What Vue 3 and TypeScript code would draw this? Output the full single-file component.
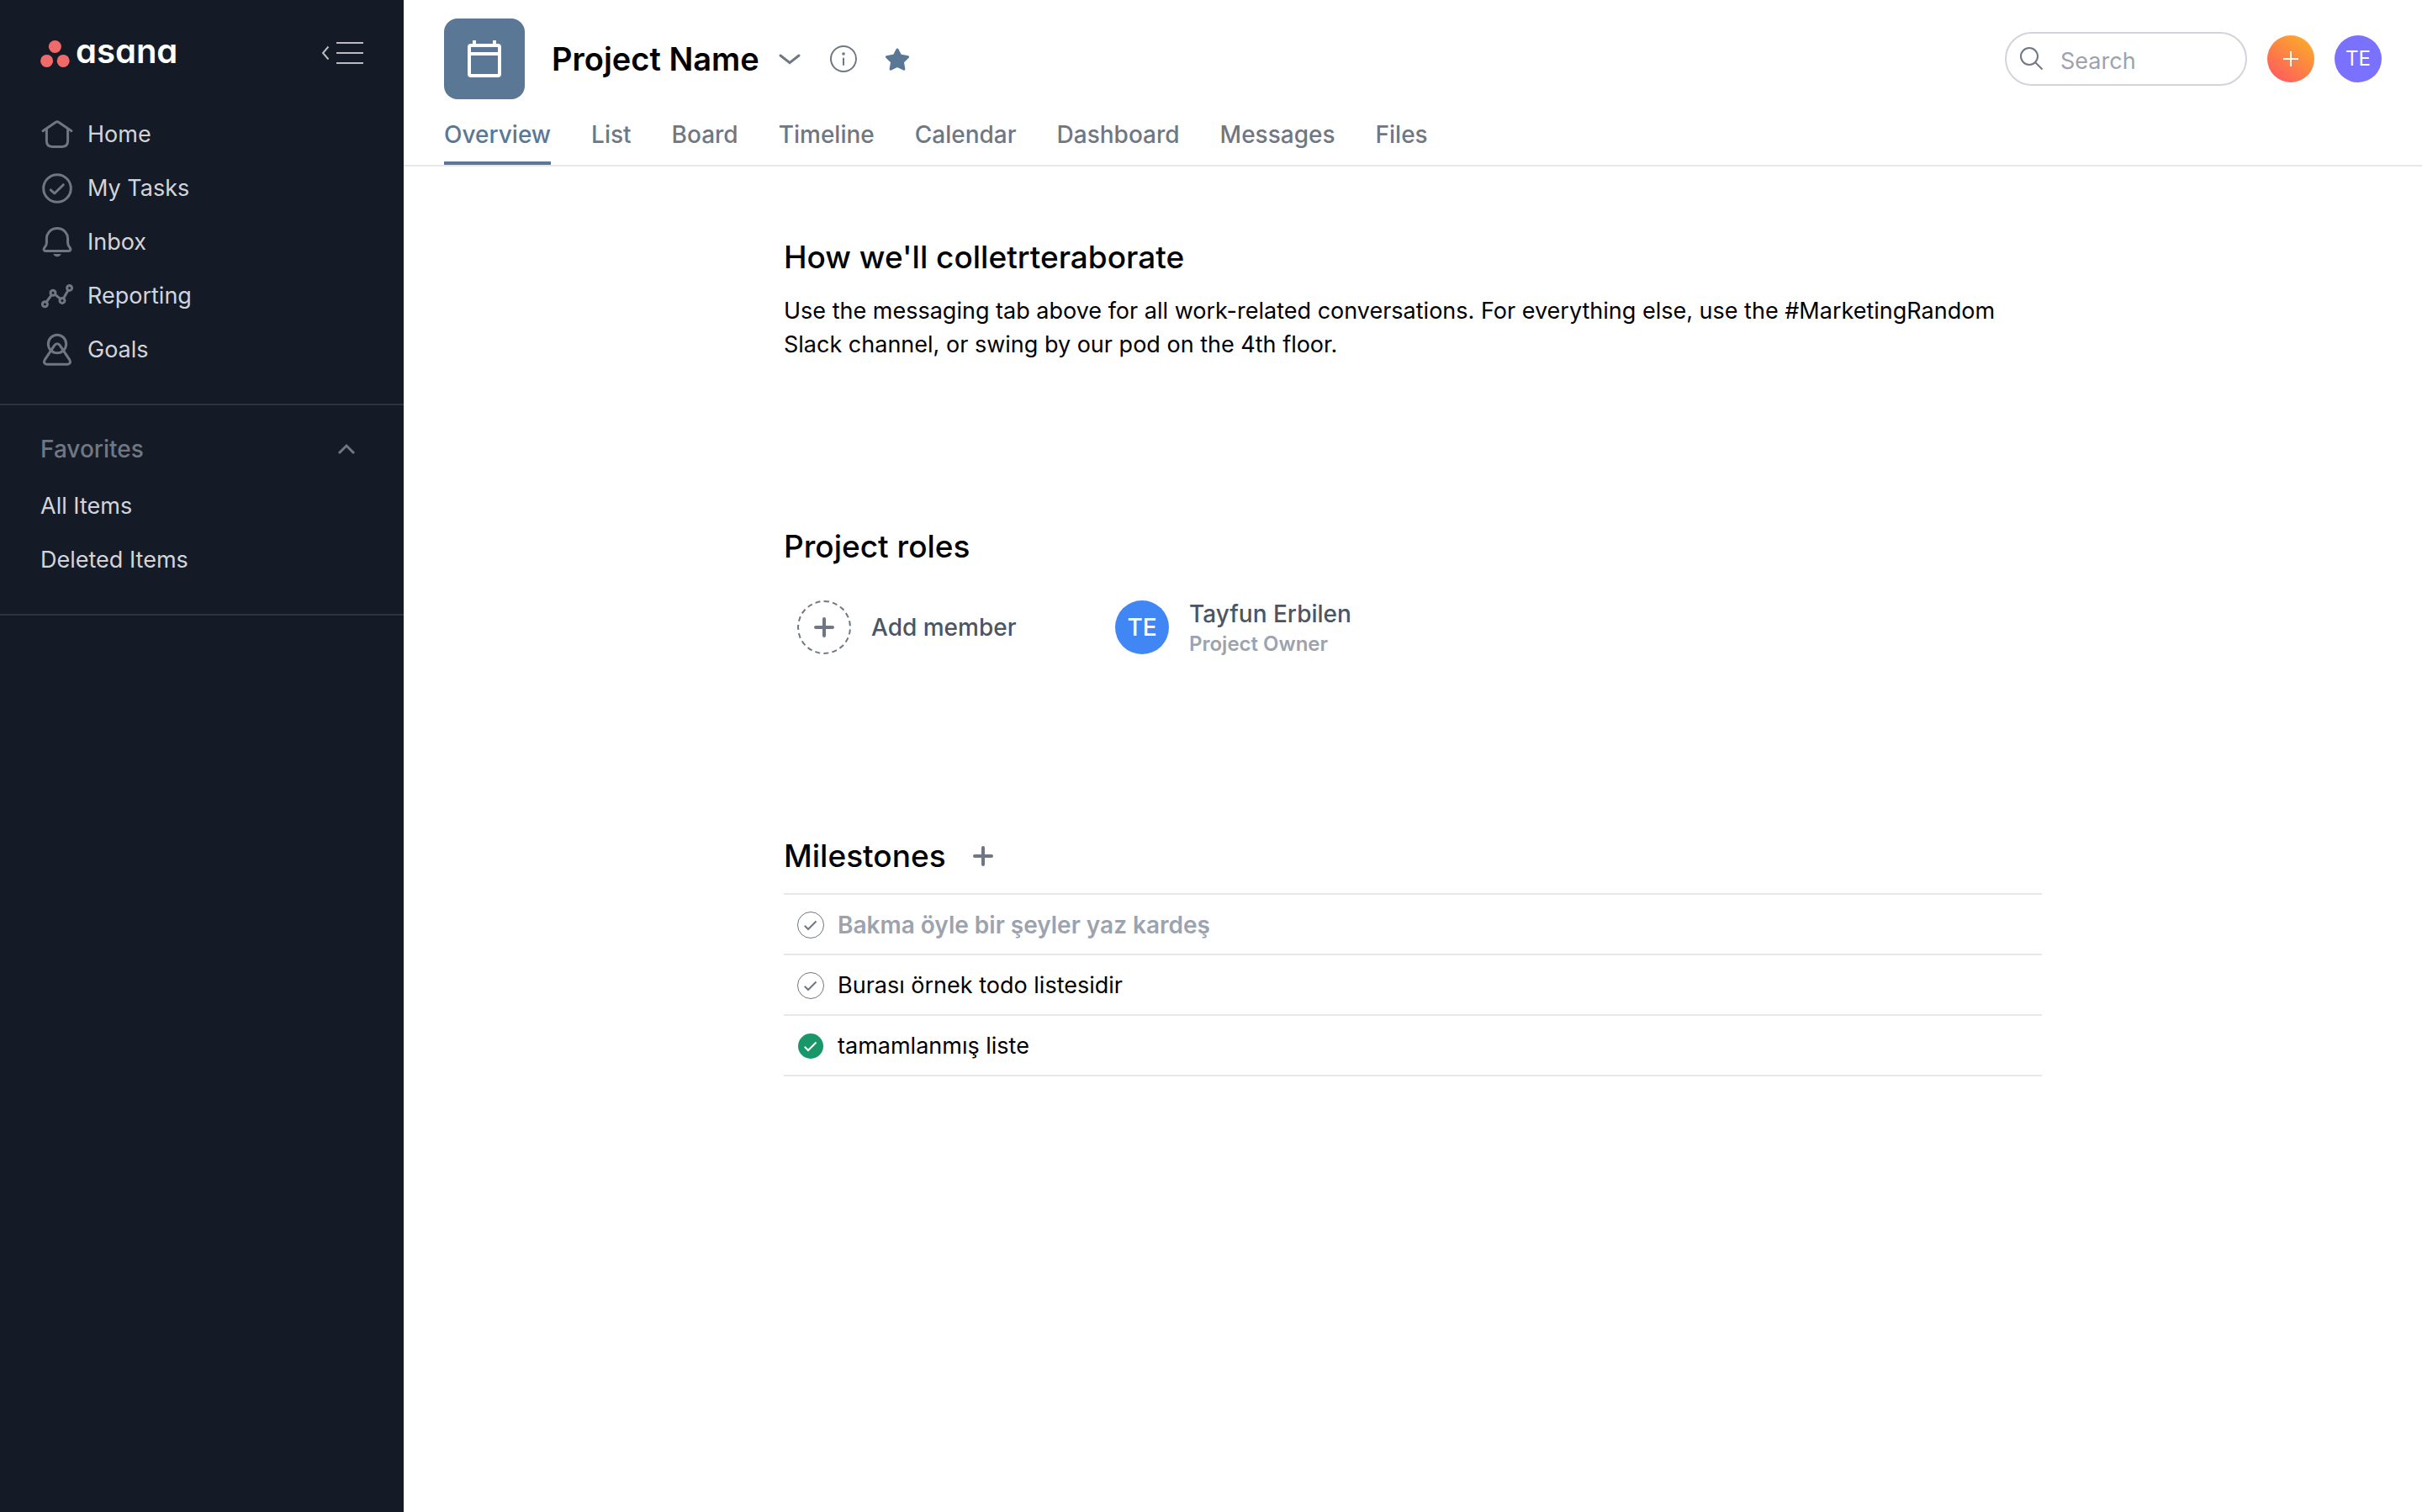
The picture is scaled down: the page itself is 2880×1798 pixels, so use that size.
<script setup lang="ts">
import { ref } from 'vue'

interface NavItem {
  label: string
  icon: 'home' | 'tasks' | 'inbox' | 'reporting' | 'goals'
}

interface Milestone {
  id: number
  text: string
  done: boolean
  muted: boolean
}

const navItems: NavItem[] = [
  { label: 'Home', icon: 'home' },
  { label: 'My Tasks', icon: 'tasks' },
  { label: 'Inbox', icon: 'inbox' },
  { label: 'Reporting', icon: 'reporting' },
  { label: 'Goals', icon: 'goals' },
]

const favorites: string[] = ['All Items', 'Deleted Items']

const tabs: string[] = ['Overview', 'List', 'Board', 'Timeline', 'Calendar', 'Dashboard', 'Messages', 'Files']
const activeTab = ref('Overview')
const query = ref('')

const milestones = ref<Milestone[]>([
  { id: 1, text: 'Bakma öyle bir şeyler yaz kardeş', done: false, muted: true },
  { id: 2, text: 'Burası örnek todo listesidir', done: false, muted: false },
  { id: 3, text: 'tamamlanmış liste', done: true, muted: false },
])
</script>

<template>
  <div class="app">
    <aside class="sidebar">
      <div class="brand-row">
        <a href="#" class="brand">
          <svg class="brand-mark" viewBox="0 0 36 32" aria-hidden="true">
            <circle cx="17.4" cy="7.5" r="7.5" />
            <circle cx="7.6" cy="24.4" r="7.5" />
            <circle cx="27.2" cy="24.4" r="7.5" />
          </svg>
          <span class="brand-name">asana</span>
        </a>
        <button class="icon-button" type="button" aria-label="Collapse sidebar">
          <svg class="collapse-icon" viewBox="0 0 50 28" aria-hidden="true">
            <path d="M8.500 5.500L2 13L8.500 20.500M18 1H50M18 13H50M18 25H50" />
          </svg>
        </button>
      </div>

      <nav class="nav" aria-label="Main">
        <a v-for="item in navItems" :key="item.label" href="#" class="nav-link">
          <svg class="nav-icon" viewBox="0 0 40 40" aria-hidden="true">
            <template v-if="item.icon === 'home'">
              <path d="M3 15.700L18.400 5.300Q20 4.200 21.600 5.300L37 15.700" />
              <path d="M7.400 13.500V27.800Q7.400 34.400 14 34.400H26Q32.600 34.400 32.600 27.800V13.500" />
            </template>
            <template v-else-if="item.icon === 'tasks'">
              <circle cx="20" cy="20" r="16.300" />
              <path d="M12.300 21.800L16.800 26L27.300 15.700" />
            </template>
            <template v-else-if="item.icon === 'inbox'">
              <path d="M20 3.500C12.600 3.500 7.400 9.200 7.400 16V21C7.400 23.200 6.800 24 5 26.400C3.400 28.600 4 30.400 6.400 30.400H33.600C36 30.400 36.600 28.600 35 26.400C33.200 24 32.600 23.200 32.600 21V16C32.600 9.200 27.400 3.500 20 3.500Z" />
              <path class="solid" d="M15.200 34H24.800Q23 37.200 20 37.200T15.200 34Z" />
            </template>
            <template v-else-if="item.icon === 'reporting'">
              <circle cx="5.400" cy="29.700" r="3" />
              <circle cx="15" cy="16.300" r="3" />
              <circle cx="26" cy="25.400" r="3" />
              <circle cx="34.600" cy="10.400" r="3" />
              <path d="M7.200 27.200L13.200 18.800M17.400 18.200L23.700 23.400M27.500 22.700L33.100 13" />
            </template>
            <template v-else>
              <circle cx="20" cy="13" r="10.700" />
              <path d="M16.800 14.600C18.500 12 21.500 12 23.200 14.600L34.600 31.600C36.600 34.800 35.200 37.300 32 37.300H8C4.800 37.300 3.400 34.800 5.400 31.600Z" />
            </template>
          </svg>
          {{ item.label }}
        </a>
      </nav>

      <section class="favorites">
        <div class="favorites-head">
          <h2 class="favorites-title">Favorites</h2>
          <button class="icon-button fav-toggle" type="button" aria-label="Toggle favorites">
            <svg class="icon-24" viewBox="0 0 24 24" aria-hidden="true">
              <path d="M3 17L12 8L21 17" />
            </svg>
          </button>
        </div>
        <a v-for="name in favorites" :key="name" href="#" class="nav-link">{{ name }}</a>
      </section>
    </aside>

    <div class="page">
      <header class="header">
        <div class="header-top">
          <div class="project-tile">
            <svg class="project-icon" viewBox="0 0 48 48" aria-hidden="true">
              <rect x="6" y="8" width="36" height="36" rx="2" />
              <path d="M12 2V8M36 2V8M4 18H44" />
            </svg>
          </div>
          <h1 class="project-name">Project Name</h1>
          <div class="project-actions">
            <button class="icon-button" type="button" aria-label="Project menu">
              <svg class="icon-32" viewBox="0 0 32 32" aria-hidden="true">
                <path class="chevron" d="M5 12L16 20.700L27 12" />
              </svg>
            </button>
            <button class="icon-button" type="button" aria-label="Project details">
              <svg class="icon-32 info" viewBox="0 0 32 32" aria-hidden="true">
                <circle cx="16" cy="16" r="15" />
                <path d="M16 15.500V23" />
                <circle class="dot" cx="16" cy="10" r="1.800" />
              </svg>
            </button>
            <button class="icon-button" type="button" aria-label="Favorite project">
              <svg class="icon-32 star" viewBox="0 0 32 32" aria-hidden="true">
                <path d="M16 5L19.600 12L28.600 13.700L22.400 19.700L23.900 28.200L16 24.300L8.100 28.200L9.600 19.700L3.400 13.700L12.400 12Z" />
              </svg>
            </button>
          </div>

          <div class="tools">
            <label class="search">
              <svg class="icon-32 search-icon" viewBox="0 0 32 32" aria-hidden="true">
                <circle cx="13" cy="13" r="10" />
                <path d="M20.500 20.500L28.500 28.500" />
              </svg>
              <input v-model="query" class="search-input" type="search" placeholder="Search" aria-label="Search" />
            </label>
            <button class="round add" type="button" aria-label="Create">
              <svg class="icon-24" viewBox="0 0 24 24" aria-hidden="true">
                <path d="M12 3V21M3 12H21" />
              </svg>
            </button>
            <button class="round account" type="button">TE</button>
          </div>
        </div>

        <nav class="tabs" aria-label="Project views">
          <a
            v-for="tab in tabs"
            :key="tab"
            href="#"
            class="tab"
            :class="{ active: tab === activeTab }"
            @click.prevent="activeTab = tab"
          >{{ tab }}</a>
        </nav>
      </header>

      <main class="content">
        <section class="about">
          <h2 class="heading">How we'll colletrteraborate</h2>
          <p class="copy">Use the messaging tab above for all work-related conversations. For everything else, use the #MarketingRandom Slack channel, or swing by our pod on the 4th floor.</p>
        </section>

        <section class="roles-section">
          <h2 class="heading">Project roles</h2>
          <div class="roles">
            <button class="role" type="button">
              <span class="avatar dashed">
                <svg class="icon-24 plus" viewBox="0 0 24 24" aria-hidden="true">
                  <path d="M12 2V22M2 12H22" />
                </svg>
              </span>
              <span class="role-name">Add member</span>
            </button>
            <button class="role" type="button">
              <span class="avatar owner">TE</span>
              <span class="role-text">
                <span class="role-name">Tayfun Erbilen</span>
                <span class="role-title">Project Owner</span>
              </span>
            </button>
          </div>
        </section>

        <section>
          <div class="milestones-head">
            <h2 class="heading">Milestones</h2>
            <button class="icon-button" type="button" aria-label="Add milestone">
              <svg class="icon-24 plus" viewBox="0 0 24 24" aria-hidden="true">
                <path d="M12 2V22M2 12H22" />
              </svg>
            </button>
          </div>
          <ul class="milestones">
            <li v-for="m in milestones" :key="m.id">
              <label class="milestone" :class="{ muted: m.muted }">
                <input v-model="m.done" class="check-input" type="checkbox" />
                <svg class="icon-32 check" :class="{ done: m.done }" viewBox="0 0 32 32" aria-hidden="true">
                  <circle cx="16" cy="16" :r="m.done ? 15 : 15.5" />
                  <path d="M8.800 16.800L13 21L22.500 11.500" />
                </svg>
                <span>{{ m.text }}</span>
              </label>
            </li>
          </ul>
        </section>
      </main>
    </div>
  </div>
</template>

<style>
body {
  margin: 0;
  background: #fff;
}
</style>

<style scoped>
.app {
  display: flex;
  min-height: 100vh;
  font-family: Inter, "Liberation Sans", sans-serif;
  font-size: 27px;
  line-height: 40px;
  color: #000;
}

.app *,
.app *::before {
  box-sizing: border-box;
}

h1,
h2,
p,
ul {
  margin: 0;
  padding: 0;
}

a {
  color: inherit;
  text-decoration: none;
}

button,
input {
  font: inherit;
  color: inherit;
}

button {
  margin: 0;
  padding: 0;
  border: 0;
  background: none;
  cursor: pointer;
}

svg {
  display: block;
  flex: none;
  fill: none;
}

.icon-24 {
  width: 24px;
  height: 24px;
}

.icon-32 {
  width: 32px;
  height: 32px;
}

.icon-button {
  display: flex;
  align-items: center;
  justify-content: center;
  color: #6f7782;
}

/* Sidebar */
.sidebar {
  flex: none;
  width: 480px;
  background: #151b26;
  color: #d1d5db;
}

.brand-row {
  display: flex;
  align-items: center;
  justify-content: space-between;
  height: 128px;
  padding: 0 48px;
}

.brand {
  display: flex;
  align-items: center;
  gap: 6px;
}

.brand-mark {
  width: 36px;
  height: 32px;
  fill: #f06a6a;
}

.brand-name {
  padding-bottom: 6px;
  color: #fff;
  font-size: 40px;
  font-weight: 600;
  font-feature-settings: "cv11";
}

.collapse-icon {
  width: 50px;
  height: 28px;
  stroke: #b9bbbe;
  stroke-width: 2;
}

.nav {
  padding-bottom: 32px;
  border-bottom: 2px solid #2e333d;
}

.nav-link {
  display: flex;
  align-items: center;
  gap: 16px;
  height: 64px;
  padding: 0 48px;
}

.nav-icon {
  width: 40px;
  height: 40px;
  stroke: #6f7782;
  stroke-width: 3;
  stroke-linecap: round;
  stroke-linejoin: round;
}

.nav-icon .solid {
  fill: #6f7782;
  stroke: none;
}

.favorites {
  padding: 20px 0 32px;
  border-bottom: 2px solid #2e333d;
}

.favorites-head {
  display: flex;
  align-items: center;
  justify-content: space-between;
  height: 64px;
  margin-bottom: 4px;
  padding: 0 48px;
}

.favorites-title {
  color: #6f7782;
  font-size: 28px;
  font-weight: 500;
}

.fav-toggle {
  width: 40px;
  height: 40px;
}

.fav-toggle svg {
  stroke: currentColor;
  stroke-width: 3;
}

/* Header */
.page {
  flex: 1;
  min-width: 0;
}

.header {
  padding: 0 48px;
  border-bottom: 2px solid #e5e7eb;
}

.header-top {
  display: flex;
  align-items: center;
  height: 140px;
}

.project-tile {
  display: flex;
  align-items: center;
  justify-content: center;
  width: 96px;
  height: 96px;
  margin-right: 32px;
  border-radius: 16px;
  background: #5a7896;
}

.project-icon {
  width: 48px;
  height: 48px;
  stroke: #fff;
  stroke-width: 4;
}

.project-name {
  font-size: 38px;
  line-height: 56px;
  font-weight: 600;
}

.project-actions {
  display: flex;
  gap: 32px;
  margin-left: 20px;
}

.chevron {
  stroke: currentColor;
  stroke-width: 3;
  stroke-linecap: round;
}

.info {
  stroke: currentColor;
  stroke-width: 2;
  stroke-linecap: round;
}

.info .dot {
  fill: currentColor;
  stroke: none;
}

.star {
  fill: #5a7896;
  stroke: #5a7896;
  stroke-width: 3;
  stroke-linejoin: round;
}

.tools {
  display: flex;
  align-items: center;
  gap: 24px;
  margin-left: auto;
}

.search {
  display: flex;
  align-items: center;
  gap: 18px;
  width: 288px;
  height: 64px;
  padding: 0 14px;
  border: 2px solid #d1d5db;
  border-radius: 32px;
}

.search-icon {
  stroke: #6f7782;
  stroke-width: 2;
}

.search-input {
  flex: 1;
  min-width: 0;
  height: 60px;
  padding: 4px 0 0;
  border: 0;
  outline: 0;
  background: none;
  appearance: none;
}

.search-input::placeholder {
  color: #9ca3af;
  opacity: 1;
}

.round {
  display: flex;
  align-items: center;
  justify-content: center;
  width: 56px;
  height: 56px;
  border-radius: 50%;
  color: #fff;
  font-size: 24px;
}

.add {
  background: linear-gradient(35deg, #ff5263, #fab424);
}

.add svg {
  stroke: #fff;
  stroke-width: 2;
}

.account {
  background: #7a72ff;
}

.tabs {
  display: flex;
  gap: 48px;
}

.tab {
  height: 56px;
  border-bottom: 4px solid transparent;
  color: #6f7782;
  font-size: 28px;
  font-weight: 500;
}

.tab.active {
  border-bottom-color: #5a7896;
  color: #5a7896;
}

/* Content */
.content {
  max-width: 1496px;
  margin: 0 auto;
  padding: 80px 0;
}

.heading {
  font-size: 37px;
  line-height: 56px;
  font-weight: 500;
}

.copy {
  margin-top: 16px;
}

.roles-section {
  margin: 192px 0 208px;
}

.roles {
  display: grid;
  grid-template-columns: repeat(4, 1fr);
  gap: 16px;
  margin-top: 32px;
}

.role {
  display: flex;
  align-items: center;
  gap: 24px;
  height: 72px;
  padding: 0 16px;
  font-size: 28px;
  font-weight: 500;
  text-align: left;
  white-space: nowrap;
}

.avatar {
  display: flex;
  flex: none;
  align-items: center;
  justify-content: center;
  width: 64px;
  height: 64px;
  border-radius: 50%;
}

.dashed {
  border: 2px dashed #6f7782;
  color: #6f7782;
}

.plus {
  stroke: currentColor;
  stroke-width: 4;
  stroke-linecap: round;
}

.owner {
  background: #4186f5;
  color: #fff;
}

.role-text {
  display: flex;
  flex-direction: column;
}

.role-name {
  color: #4b5563;
}

.role-title {
  color: #9ca3af;
  font-size: 24px;
  line-height: 32px;
  font-weight: 600;
}

.milestones-head {
  display: flex;
  align-items: center;
  gap: 32px;
}

.milestones {
  margin-top: 16px;
  border-top: 2px solid #e5e7eb;
  list-style: none;
}

.milestone {
  position: relative;
  display: flex;
  align-items: center;
  gap: 16px;
  height: 72px;
  padding: 2px 16px 0;
  border-bottom: 2px solid #e5e7eb;
}

.muted {
  color: #9ca3af;
  font-size: 28px;
  font-weight: 600;
}

.check-input {
  position: absolute;
  width: 32px;
  height: 32px;
  margin: 0;
  opacity: 0;
}

.check circle {
  stroke: #6f7782;
  stroke-width: 1;
}

.check path {
  stroke: #6f7782;
  stroke-width: 2;
}

.check.done circle {
  fill: #19976b;
  stroke: none;
}

.check.done path {
  stroke: #fff;
}
</style>
